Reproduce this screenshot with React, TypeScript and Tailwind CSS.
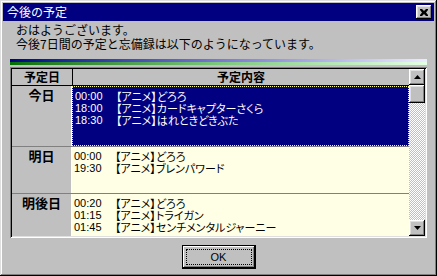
import React from 'react';

const raised =
  'shadow-[inset_-1px_-1px_#000,inset_1px_1px_#fff,inset_-2px_-2px_#808080,inset_2px_2px_#dfdfdf]';

type Item = { time: string; title: string };
type Day = { label: string; items: Item[]; height: string; selected?: boolean };

const days: Day[] = [
  {
    label: '今日',
    height: 'h-[61px]',
    selected: true,
    items: [
      { time: '00:00', title: '【アニメ】どろろ' },
      { time: '18:00', title: '【アニメ】カードキャプターさくら' },
      { time: '18:30', title: '【アニメ】はれときどきぶた' },
    ],
  },
  {
    label: '明日',
    height: 'h-[47px]',
    items: [
      { time: '00:00', title: '【アニメ】どろろ' },
      { time: '19:30', title: '【アニメ】ブレンパワード' },
    ],
  },
  {
    label: '明後日',
    height: 'h-[47px]',
    items: [
      { time: '00:20', title: '【アニメ】どろろ' },
      { time: '01:15', title: '【アニメ】トライガン' },
      { time: '01:45', title: '【アニメ】センチメンタルジャーニー' },
    ],
  },
];

const Arrow = ({ down }: { down?: boolean }) => (
  <svg width="7" height="4" viewBox="0 0 7 4" className={down ? 'rotate-180' : ''}>
    <path d="M3.5 0 L7 4 L0 4 Z" fill="#000" />
  </svg>
);

const Row = ({ day }: { day: Day }) => (
  <div className={`flex shrink-0 ${day.height} border-b border-[#808080]`}>
    <div className="w-[60px] shrink-0 border-r border-white bg-[#c0c0c0] pt-[2px] text-center text-[13px] font-bold leading-[14px] text-black">
      {day.label}
    </div>
    <div
      className={`flex-1 pl-[2px] pt-[3px] ${
        day.selected
          ? 'border border-dotted border-[#ffff80] bg-[#000080] text-white'
          : 'bg-[#ffffe6] text-black'
      }`}
    >
      {day.items.map((it) => (
        <div key={it.time} className="flex h-[12px] items-center leading-[12px]">
          <span className="w-[41px] shrink-0 font-['Liberation_Sans',sans-serif] text-[11px]">{it.time}</span>
          <span className="text-[11px] [font-feature-settings:'palt']">{it.title}</span>
        </div>
      ))}
    </div>
  </div>
);

const App = () => {
  return (
    <div className="flex h-[276px] w-[437px] flex-col bg-[#c0c0c0] p-[3px] font-['Noto_Sans_CJK_JP',sans-serif] shadow-[inset_-1px_-1px_#000,inset_1px_1px_#dfdfdf,inset_-2px_-2px_#808080,inset_2px_2px_#fff]">
      {/* title bar */}
      <div className="flex h-[18px] items-center justify-between bg-[#000080] pl-[4px] pr-[2px]">
        <span className="text-[12px] leading-[14px] text-white">今後の予定</span>
        <button className={`flex h-[14px] w-[16px] items-center justify-center bg-[#c0c0c0] ${raised}`}>
          <svg width="8" height="7" viewBox="0 0 8 7">
            <path d="M0 0h2l2 2 2-2h2v1L6 3.5 8 6v1H6L4 5 2 7H0V6l2-2.5L0 1Z" fill="#000" />
          </svg>
        </button>
      </div>

      {/* message */}
      <div className="pl-[13px] pt-[2px] text-[12px] leading-[14px] text-black">
        <p>おはようございます。</p>
        <p>今後7日間の予定と忘備録は以下のようになっています。</p>
      </div>

      {/* gradient bar */}
      <div className="mx-[7px] mt-[8px] flex h-[6px] flex-col">
        <div className="h-[3px] bg-gradient-to-r from-[#000080] via-[#7878d0] to-[#ecebff]" />
        <div className="h-[3px] bg-gradient-to-r from-[#007000] via-[#7cc87c] to-[#e4ffe4]" />
      </div>

      {/* grid */}
      <div className="mx-[7px] mt-[2px] flex h-[171px] p-[2px] shadow-[inset_1px_1px_#808080,inset_-1px_-1px_#fff,inset_2px_2px_#000,inset_-2px_-2px_#dfdfdf]">
        <div className="flex flex-1 flex-col overflow-hidden bg-[#c0c0c0]">
          <div className="flex h-[17px] shrink-0 border-b border-black text-[12px] font-bold leading-[16px] text-black">
            <div className="w-[61px] shrink-0 border-r border-black text-center">予定日</div>
            <div className="flex-1 text-center">予定内容</div>
          </div>
          {days.map((d) => (
            <Row key={d.label} day={d} />
          ))}
        </div>
        <div className="flex w-[16px] shrink-0 flex-col">
          <div className={`flex h-[16px] shrink-0 items-center justify-center bg-[#c0c0c0] ${raised}`}>
            <Arrow />
          </div>
          <div className={`h-[18px] shrink-0 bg-[#c0c0c0] ${raised}`} />
          <div className="flex-1 bg-[repeating-conic-gradient(#c0c0c0_0_25%,#fff_0_50%)] bg-[length:2px_2px]" />
          <div className={`flex h-[16px] shrink-0 items-center justify-center bg-[#c0c0c0] ${raised}`}>
            <Arrow down />
          </div>
        </div>
      </div>

      {/* OK */}
      <div className="mt-[7px] flex justify-center">
        <button className="h-[24px] w-[74px] border border-black bg-[#c0c0c0] p-[3px] shadow-[inset_-1px_-1px_#000,inset_1px_1px_#fff,inset_-2px_-2px_#808080]">
          <div className="flex h-full items-center justify-center border border-dotted border-black font-['Liberation_Sans',sans-serif] text-[11px] text-black">
            OK
          </div>
        </button>
      </div>
    </div>
  );
};

export default App;
